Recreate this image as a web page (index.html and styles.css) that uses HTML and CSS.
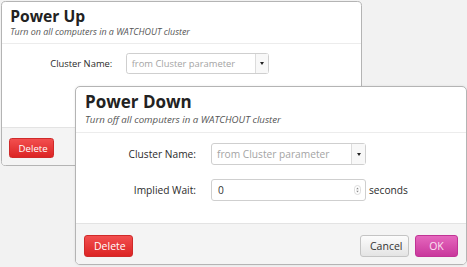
FILE: index.html
```html
<!DOCTYPE html>
<html lang="en">
<head>
    <meta charset="UTF-8">
    <title>Power Up / Power Down</title>
    <link rel="stylesheet" href="styles.css">
</head>
<body>
    <div class="desk">
        <div class="dialog dialog-back">
            <div class="dialog-head">
                <h2 class="dialog-title">Power Up</h2>
                <p class="dialog-sub">Turn on all computers in a WATCHOUT cluster</p>
            </div>
            <div class="dialog-body">
                <div class="field">
                    <label>Cluster Name:</label>
                    <div class="select">
                        <span class="select-text">from Cluster parameter</span>
                        <span class="select-arrow"></span>
                    </div>
                </div>
            </div>
            <div class="dialog-foot">
                <button class="btn btn-delete">Delete</button>
            </div>
        </div>

        <div class="dialog dialog-front">
            <div class="dialog-head">
                <h2 class="dialog-title">Power Down</h2>
                <p class="dialog-sub">Turn off all computers in a WATCHOUT cluster</p>
            </div>
            <div class="dialog-body">
                <div class="field">
                    <label>Cluster Name:</label>
                    <div class="select">
                        <span class="select-text">from Cluster parameter</span>
                        <span class="select-arrow"></span>
                    </div>
                </div>
                <div class="field">
                    <label>Implied Wait:</label>
                    <div class="number">
                        <span class="number-value">0</span>
                        <svg class="spin" width="7" height="10" viewBox="0 0 7 10">
                            <rect x="0.5" y="0.5" width="6" height="9" rx="3" fill="none" stroke="#d4d4d4" stroke-width="0.8"/>
                            <path d="M2.2 4.2 L3.5 2.6 L4.8 4.2 Z M2.2 5.8 L3.5 7.4 L4.8 5.8 Z" fill="#8c8c8c"/>
                        </svg>
                    </div>
                    <span class="unit">seconds</span>
                </div>
            </div>
            <div class="dialog-foot">
                <button class="btn btn-delete">Delete</button>
                <span class="spacer"></span>
                <button class="btn btn-cancel">Cancel</button>
                <button class="btn btn-ok">OK</button>
            </div>
        </div>
    </div>
</body>
</html>
```

FILE: styles.css
```css
body, html {
    margin: 0;
    padding: 0;
    background-color: #f2f2f2;
    font-family: 'Open Sans', 'DejaVu Sans', sans-serif;
    color: #333;
}
.desk {
    position: relative;
    width: 467px;
    height: 267px;
    overflow: hidden;
}
.dialog {
    position: absolute;
    width: 392px;
    box-sizing: border-box;
    background-color: #fff;
    border: 1px solid #b4b4b4;
    border-radius: 5px;
    overflow: hidden;
}
.dialog-back {
    zoom: 0.92;
    left: 1px;
    top: 1px;
}
.dialog-front {
    left: 75px;
    top: 86px;
    box-shadow: 0 0 3px rgba(0, 0, 0, 0.08);
}
.dialog-head {
    padding: 4px 9px 6px;
    border-bottom: 1px solid #ececec;
}
.dialog-title {
    margin: 0;
    font-size: 17px;
    line-height: 22px;
    font-weight: 700;
    color: #222;
}
.dialog-sub {
    margin: 0;
    font-size: 9.7px;
    line-height: 13px;
    font-style: italic;
    color: #555;
}
.dialog-body {
    height: 90px;
    box-sizing: border-box;
    padding-top: 10px;
    display: flex;
    flex-direction: column;
    gap: 14px;
}
.field {
    display: grid;
    grid-template-columns: 120px 155px auto;
    column-gap: 15px;
    align-items: center;
}
.field label {
    text-align: right;
    font-size: 10.2px;
    color: #2b2b2b;
}
.select, .number {
    height: 22px;
    box-sizing: border-box;
    border: 1px solid #cfcfcf;
    border-radius: 3px;
    display: flex;
    align-items: center;
    font-size: 10.2px;
    background-color: #fff;
}
.select-text {
    flex: 1;
    padding-left: 5px;
    color: #a4a4a4;
}
.select-arrow {
    width: 13px;
    height: 100%;
    border-left: 1px solid #dcdcdc;
    background-color: #f8f8f8;
    display: flex;
    justify-content: center;
    align-items: center;
}
.select-arrow::after {
    content: '';
    border-left: 2.5px solid transparent;
    border-right: 2.5px solid transparent;
    border-top: 3.5px solid #222;
}
.number {
    justify-content: space-between;
    padding: 0 4px 0 6px;
}
.number-value {
    color: #333;
}
.unit {
    margin-left: -12px;
    font-size: 10.2px;
    color: #2b2b2b;
}
.dialog-foot {
    display: flex;
    align-items: flex-start;
    gap: 6px;
    height: 41px;
    box-sizing: border-box;
    padding: 11px 8px 0;
    background-color: #f4f4f4;
    border-top: 1px solid #e3e3e3;
}
.spacer {
    flex: 1;
}
.btn {
    font-family: inherit;
    font-size: 10.5px;
    height: 22px;
    padding: 0 9px;
    border-radius: 3px;
    cursor: pointer;
}
.btn-delete {
    width: 49px;
    color: #fff;
    background: linear-gradient(#f24f4f, #dc2424);
    border: 1px solid #cf2a2a;
}
.btn-cancel {
    width: 49px;
    color: #333;
    background: linear-gradient(#fcfcfc, #e4e4e4);
    border: 1px solid #c4c4c4;
}
.btn-ok {
    width: 43px;
    color: #fbe3f2;
    background: linear-gradient(#e567bd, #c9379c);
    border: 1px solid #c03495;
}
```
